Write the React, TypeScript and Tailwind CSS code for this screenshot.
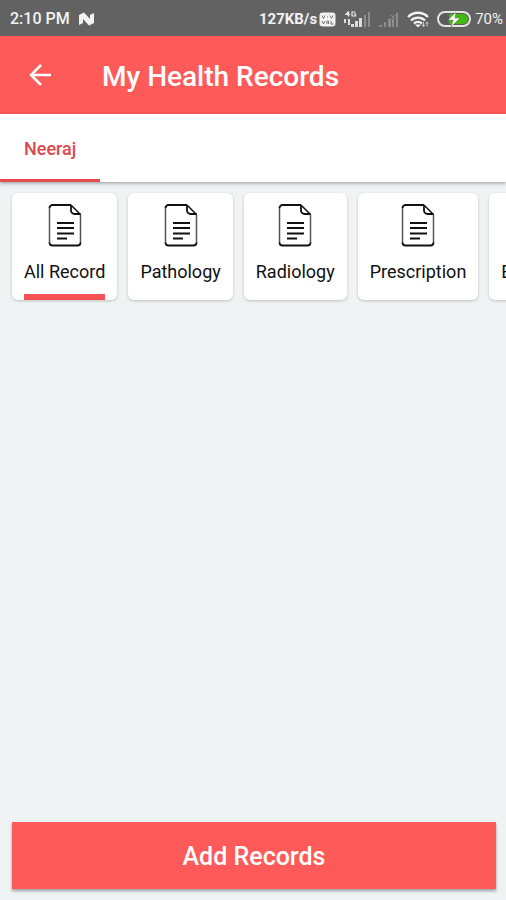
import React from 'react';

const RecordIcon: React.FC = () => (
  <svg width="34" height="44" viewBox="0 0 34 44" fill="none" stroke="#111" aria-hidden="true">
    <path d="M1.500 4.500V40M32.500 11.500V40" stroke="#555" strokeWidth="1.500" />
    <path d="M23 2H4.500A3 3 0 0 0 1.500 5M1.500 39.500a3 3 0 0 0 3 3h25a3 3 0 0 0 3-3" strokeWidth="1.800" />
    <path d="M23 2l9.500 9.500" strokeWidth="1.500" />
    <path d="M23 2v5.500a3.500 3.500 0 0 0 3.500 3.500h6" strokeWidth="1.800" />
    <path d="M9 20h17M9 25h17M9 30.500h17M9 35.500h10" strokeWidth="2" />
  </svg>
);

const StatusBar: React.FC = () => (
  <div className="flex h-9 items-center bg-[#626262] pl-[10px] pr-[3px] pt-[2px] text-[#f2f2f2]">
    <span className="text-base font-medium">2:10 PM</span>
    <svg className="ml-2" width="17" height="14" viewBox="0 0 17 14" fill="#f2f2f2" aria-hidden="true">
      <path d="M1 3l5-2.500L12 7V3l4-2v10l-5 2.500L5 7v4l-4 2z" />
    </svg>
    <span className="ml-auto text-[15px] font-bold">127KB/s</span>
    <svg className="ml-[2px]" width="17" height="15" viewBox="0 0 17 15" fill="none" aria-hidden="true">
      <rect x="0.500" y="0.500" width="16" height="14" rx="3" fill="#f2f2f2" />
      <path d="M3 3.500l1.500 3L6 3.500M8 5h1M11 3.500l1.500 3L14 3.500M3 9l1.500 3L6 9M8 12V9h1.500v3M12 9v3h2.500" stroke="#777" />
    </svg>
    <svg className="ml-2" width="27" height="17" viewBox="0 0 27 17" aria-hidden="true">
      <path d="M4.500 0.500L2 3.500h4M4.500 0.500v5M11.500 1H8v4h3.500V3H10" stroke="#eee" strokeWidth="1.200" fill="none" />
      <path d="M0 8h2v4H0zM4 8h2v6H4zM7 13h3v3H7zM11 10h3v6h-3zM15 7h3v9h-3z" fill="#ddd" />
      <path d="M20 4h2v12h-2zM24 1h2v15h-2z" fill="#8d8d8d" />
    </svg>
    <svg className="ml-2" width="20" height="17" viewBox="0 0 20 17" fill="#8d8d8d" aria-hidden="true">
      <path d="M0 14h3v2H0zM5 11h2v5H5zM9 8h3v8H9zM13 8h2v8h-2zM17 2h2v14h-2z" />
      <path d="M12 4l4 4M16 4l-4 4" stroke="#8d8d8d" />
    </svg>
    <svg className="ml-2" width="22" height="17" viewBox="0 0 22 17" fill="none" stroke="#f2f2f2" strokeWidth="2.400" aria-hidden="true">
      <path d="M1 6a14 14 0 0 1 20 0M4 9.500a10 10 0 0 1 14 0M7 12.500a6 6 0 0 1 8 0" />
      <path d="M8 13.500l3 3 3-3z" fill="#f2f2f2" stroke="none" />
      <path d="M16.500 11v4.500M15 14l1.500 1.500L18 14M20 15.500V11M18.500 12.500L20 11l1.500 1.500" stroke="#ccc" strokeWidth="1" />
    </svg>
    <svg className="ml-2" width="34" height="18" viewBox="0 0 34 18" aria-hidden="true">
      <rect x="1" y="2" width="32" height="14" rx="7" fill="#5c5c5c" stroke="#e5e5e5" strokeWidth="2" />
      <path d="M12 4h14a5 5 0 0 1 0 10H12z" fill="#43b813" />
      <path d="M19 2l-8 8h5l-2 7 9-9h-5z" fill="#fff" stroke="#4c7a3c" strokeWidth="0.500" />
    </svg>
    <span className="ml-1 text-[15px]">70%</span>
  </div>
);

const App: React.FC = () => {
  const categories = ['All Record', 'Pathology', 'Radiology', 'Prescription', 'ECG Report'];

  return (
    <div className="flex min-h-screen flex-col bg-[#f0f3f3] font-['Roboto',sans-serif]">
      <StatusBar />

      <header className="flex h-[78px] items-center bg-[#ff5a5a] px-7 text-white">
        <button type="button" aria-label="Back">
          <svg width="24" height="24" viewBox="0 0 24 24" fill="none" stroke="#fff" strokeWidth="2.500" aria-hidden="true">
            <path d="M13 2L3 12l10 10M3 12h20" />
          </svg>
        </button>
        <h1 className="ml-[50px] pt-1 text-[28px] font-medium leading-9">My Health Records</h1>
      </header>

      <nav className="flex h-[68px] bg-white shadow-[0_1px_4px_rgba(0,0,0,0.4)]">
        <button type="button" className="border-b-3 border-[#e84c50] px-6 pt-1 text-lg font-medium text-[#dc4a4e]">
          Neeraj
        </button>
      </nav>

      <div className="flex gap-[11px] overflow-hidden px-3 py-[11px]">
        {categories.map((name, idx) => (
          <button
            key={name}
            type="button"
            className="flex h-[107px] shrink-0 flex-col items-center rounded-md bg-white px-3 pt-[10px] shadow-[0_1px_3px_rgba(0,0,0,0.2)]"
          >
            <RecordIcon />
            <span className="mt-[11px] text-lg leading-7 text-[#111]">{name}</span>
            {idx === 0 && <span className="mt-auto h-[6px] w-full bg-[#f45254]" />}
          </button>
        ))}
      </div>

      <div className="mt-auto pb-[11px] pl-3 pr-[10px]">
        <button type="button" className="h-[67px] w-full bg-[#ff5a5a] pt-[2px] text-[25px] font-medium text-white shadow-[0_2px_3px_rgba(0,0,0,0.35)]">
          Add Records
        </button>
      </div>
    </div>
  );
};

export default App;
